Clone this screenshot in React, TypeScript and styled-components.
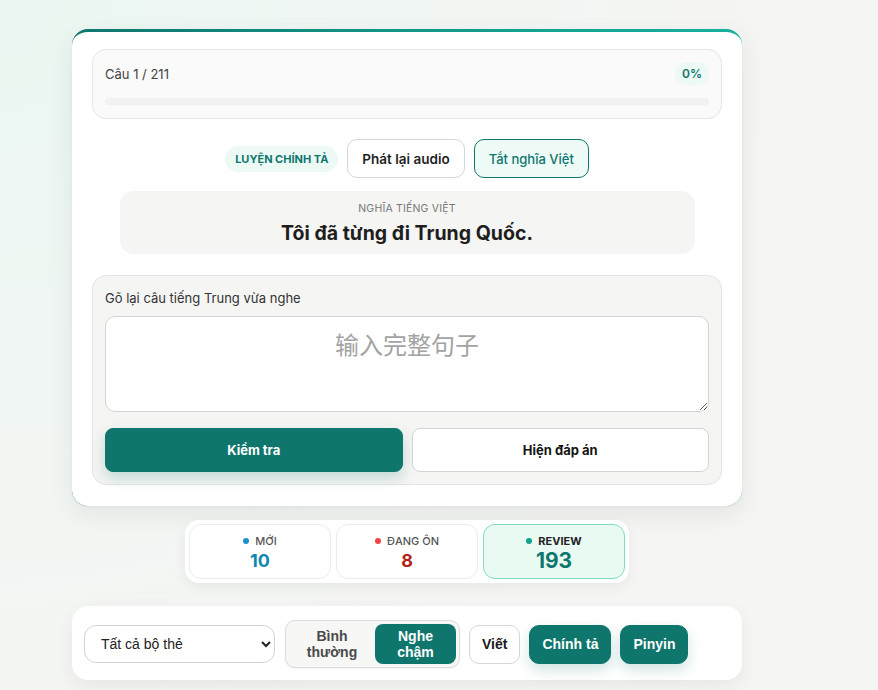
import styled, { createGlobalStyle } from 'styled-components'

const GlobalStyle = createGlobalStyle`
    html, body {
        margin: 0;
        min-height: 100%;
    }
    body {
        background: radial-gradient(circle at 0% 0%, #eaf6f1 0%, #f0f6f3 35%, #f5f5f3 70%);
        font-family: Inter, "Noto Sans", "Noto Sans CJK SC", sans-serif;
        color: #222;
        min-height: 690px;
    }
    * { box-sizing: border-box; }
`

const Page = styled.div`
    width: 670px;
    margin-left: 72px;
    padding-top: 29px;
    display: flex;
    flex-direction: column;
    align-items: center;
`

const Card = styled.section`
    width: 100%;
    background: #fff;
    border-radius: 16px;
    border-top: 3px solid transparent;
    background-image: linear-gradient(#fff, #fff), linear-gradient(90deg, #0f766e 0%, #14a391 70%, #16b09c 100%);
    background-origin: border-box;
    background-clip: padding-box, border-box;
    box-shadow: 0 8px 24px rgba(30, 50, 40, 0.08), 0 1px 3px rgba(0,0,0,0.04);
    padding: 17px 20px 21px;
    display: flex;
    flex-direction: column;
    align-items: center;
`

const ProgressBox = styled.div`
    width: 100%;
    background: #fafafa;
    border: 1px solid #e6e6e4;
    border-radius: 14px;
    padding: 12px 12px 13px;
`

const ProgressHead = styled.div`
    display: flex;
    justify-content: space-between;
    align-items: center;
    font-size: 13px;
    color: #444;
    height: 23px;
`

const Percent = styled.span`
    background: #edf9f5;
    color: #0f766e;
    font-size: 12px;
    font-weight: 600;
    border-radius: 999px;
    padding: 4px 7px;
`

const Track = styled.div`
    margin-top: 13px;
    height: 7px;
    background: #f1f1ef;
    border-radius: 4px;
`

const ActionRow = styled.div`
    margin-top: 20px;
    display: flex;
    align-items: center;
    gap: 9px;
`

const Tag = styled.span`
    background: #ecf9f4;
    color: #0f766e;
    font-size: 11px;
    font-weight: 700;
    padding: 6px 10px;
    border-radius: 999px;
`

const PillButton = styled.button<{ $active?: boolean }>`
    height: 39px;
    padding: 0 14px;
    border-radius: 10px;
    font-family: inherit;
    font-size: ${p => (p.$active ? '13px' : '13.5px')};
    font-weight: ${p => (p.$active ? 500 : 600)};
    color: ${p => (p.$active ? '#0f766e' : '#1f1f1f')};
    background: ${p => (p.$active ? '#eefaf6' : '#fff')};
    border: 1px solid ${p => (p.$active ? '#0f766e' : '#d6d6d6')};
`

const Meaning = styled.div`
    margin-top: 13px;
    width: 575px;
    height: 63px;
    background: #f5f5f3;
    border-radius: 14px;
    display: flex;
    flex-direction: column;
    align-items: center;
    padding-top: 11px;
`

const MeaningLabel = styled.div`
    font-size: 10.5px;
    color: #777;
    letter-spacing: 0.2px;
`

const MeaningText = styled.div`
    margin-top: 6px;
    font-size: 19.5px;
    font-weight: 700;
    color: #1e1e1e;
`

const InputSection = styled.div`
    margin-top: 21px;
    width: 100%;
    background: #f5f5f3;
    border: 1px solid #e4e4e2;
    border-radius: 14px;
    padding: 14px 12px 12px;
    display: flex;
    flex-direction: column;
`

const InputLabel = styled.label`
    font-size: 13px;
    color: #333;
    line-height: 16px;
`

const Answer = styled.textarea`
    margin-top: 10px;
    width: 100%;
    height: 96px;
    border: 1px solid #d4d4d4;
    border-radius: 10px;
    background: #fff;
    padding: 9px 12px;
    text-align: center;
    font-family: Inter, "Noto Sans CJK SC", sans-serif;
    font-size: 24px;
    outline: none;
    &::placeholder { color: #a3a3a3; }
`

const ButtonGrid = styled.div`
    margin-top: 16px;
    display: grid;
    grid-template-columns: 1fr 1fr;
    gap: 9px;
`

const WideButton = styled.button<{ $primary?: boolean }>`
    height: 44px;
    border-radius: 8px;
    font-family: inherit;
    font-size: 13px;
    font-weight: 700;
    color: ${p => (p.$primary ? '#fff' : '#141414')};
    background: ${p => (p.$primary ? '#0f766e' : '#fff')};
    border: 1px solid ${p => (p.$primary ? '#0f766e' : '#d4d4d4')};
    box-shadow: ${p => (p.$primary ? '0 6px 14px rgba(15, 118, 110, 0.22)' : 'none')};
`

const Stats = styled.div`
    margin-top: 14px;
    background: #fff;
    border-radius: 14px;
    padding: 4px;
    display: flex;
    gap: 5px;
    box-shadow: 0 4px 14px rgba(0,0,0,0.06);
`

const StatCard = styled.div<{ $highlight?: boolean }>`
    width: 142px;
    height: 55px;
    border-radius: 12px;
    border: 1px solid ${p => (p.$highlight ? '#7fdcc0' : '#ececea')};
    background: ${p => (p.$highlight ? '#e9faf3' : '#fff')};
    display: flex;
    flex-direction: column;
    align-items: center;
    justify-content: center;
    gap: 2px;
    padding-top: 2px;
`

const StatLabel = styled.div<{ $dark?: boolean }>`
    display: flex;
    align-items: center;
    gap: 6px;
    font-size: 11px;
    font-weight: ${p => (p.$dark ? 700 : 500)};
    color: ${p => (p.$dark ? '#222' : '#555')};
`

const Dot = styled.span<{ $color: string }>`
    width: 6px;
    height: 6px;
    border-radius: 50%;
    background: ${p => p.$color};
`

const StatValue = styled.div<{ $color: string; $big?: boolean }>`
    font-size: ${p => (p.$big ? '21px' : '18px')};
    font-weight: 700;
    color: ${p => p.$color};
    line-height: 22px;
`

const Toolbar = styled.div`
    margin-top: 23px;
    width: 100%;
    background: #fff;
    border-radius: 16px;
    box-shadow: 0 6px 18px rgba(0,0,0,0.06);
    padding: 14px 12px 12px;
    display: flex;
    align-items: center;
    gap: 9px;
    font-family: "Liberation Sans", Arial, sans-serif;
`

const DeckSelect = styled.select`
    width: 191px;
    height: 38px;
    border-radius: 12px;
    border: 1px solid #d4d4d4;
    background: #fff;
    padding: 0 10px 0 12px;
    font-family: "Liberation Sans", Arial, sans-serif;
    font-size: 14px;
    color: #222;
    margin-right: 1px;
`

const Segmented = styled.div`
    display: flex;
    padding: 3px;
    background: #f7f7f5;
    border: 1px solid #dcdcda;
    border-radius: 10px;
    box-shadow: 0 1px 2px rgba(0,0,0,0.05);
`

const SegmentButton = styled.button<{ $active?: boolean }>`
    width: ${p => (p.$active ? '81px' : '86px')};
    height: 40px;
    border: none;
    border-radius: 8px;
    font-family: "Liberation Sans", Arial, sans-serif;
    font-size: 14px;
    font-weight: 700;
    line-height: 16px;
    color: ${p => (p.$active ? '#fff' : '#4a4a4a')};
    background: ${p => (p.$active ? '#0f766e' : 'transparent')};
`

const ModeButton = styled.button<{ $active?: boolean }>`
    height: 39px;
    padding: 0 12px;
    border-radius: 10px;
    font-family: "Liberation Sans", Arial, sans-serif;
    font-size: 14px;
    font-weight: 700;
    color: ${p => (p.$active ? '#fff' : '#1a1a1a')};
    background: ${p => (p.$active ? '#0f766e' : '#fff')};
    border: 1px solid ${p => (p.$active ? '#0f766e' : '#d6d6d6')};
    box-shadow: ${p => (p.$active ? '0 6px 14px rgba(15, 118, 110, 0.2)' : 'none')};
`

export default function App() {
    return (
        <>
            <GlobalStyle />
            <Page>
                <Card>
                    <ProgressBox>
                        <ProgressHead>
                            <span>Câu 1 / 211</span>
                            <Percent>0%</Percent>
                        </ProgressHead>
                        <Track />
                    </ProgressBox>

                    <ActionRow>
                        <Tag>LUYỆN CHÍNH TẢ</Tag>
                        <PillButton>Phát lại audio</PillButton>
                        <PillButton $active>Tắt nghĩa Việt</PillButton>
                    </ActionRow>

                    <Meaning>
                        <MeaningLabel>NGHĨA TIẾNG VIỆT</MeaningLabel>
                        <MeaningText>Tôi đã từng đi Trung Quốc.</MeaningText>
                    </Meaning>

                    <InputSection>
                        <InputLabel>Gõ lại câu tiếng Trung vừa nghe</InputLabel>
                        <Answer placeholder="输入完整句子" />
                        <ButtonGrid>
                            <WideButton $primary>Kiểm tra</WideButton>
                            <WideButton>Hiện đáp án</WideButton>
                        </ButtonGrid>
                    </InputSection>
                </Card>

                <Stats>
                    <StatCard>
                        <StatLabel><Dot $color="#1f8fcf" />MỚI</StatLabel>
                        <StatValue $color="#1487ad">10</StatValue>
                    </StatCard>
                    <StatCard>
                        <StatLabel><Dot $color="#ef4444" />ĐANG ÔN</StatLabel>
                        <StatValue $color="#b42318">8</StatValue>
                    </StatCard>
                    <StatCard $highlight>
                        <StatLabel $dark><Dot $color="#14a38b" />REVIEW</StatLabel>
                        <StatValue $color="#0f766e" $big>193</StatValue>
                    </StatCard>
                </Stats>

                <Toolbar>
                    <DeckSelect defaultValue="all">
                        <option value="all">Tất cả bộ thẻ</option>
                    </DeckSelect>
                    <Segmented>
                        <SegmentButton>Bình<br />thường</SegmentButton>
                        <SegmentButton $active>Nghe<br />chậm</SegmentButton>
                    </Segmented>
                    <ModeButton>Viết</ModeButton>
                    <ModeButton $active>Chính tả</ModeButton>
                    <ModeButton $active>Pinyin</ModeButton>
                </Toolbar>
            </Page>
        </>
    )
}
